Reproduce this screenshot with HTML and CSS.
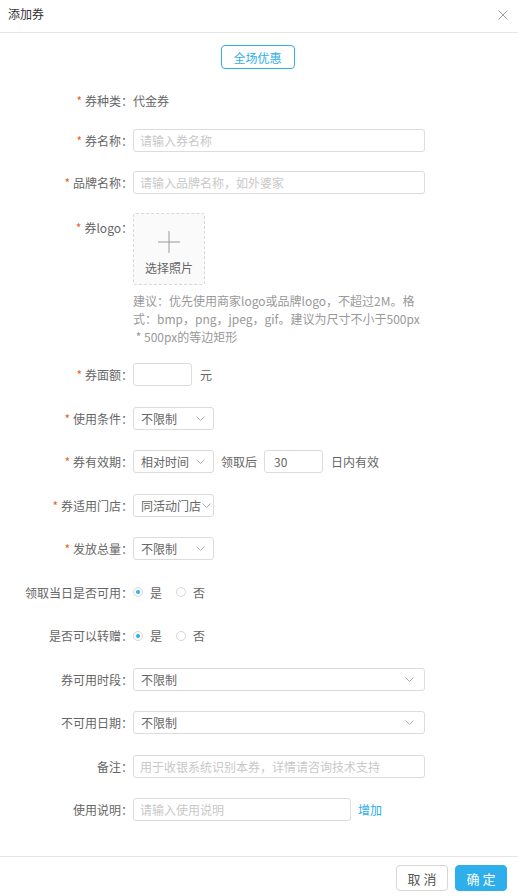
FILE: index.html
```html
<!DOCTYPE html>
<html lang="zh-CN">
<head>
    <meta charset="UTF-8">
    <meta name="viewport" content="width=device-width, initial-scale=1.0">
    <title>添加券</title>
    <link rel="stylesheet" href="styles.css">
</head>
<body>

    <div class="dialog">
        <div class="dialog-header">
            <span class="dialog-title">添加券</span>
            <svg class="close" width="10" height="10" viewBox="0 0 10 10">
                <path d="M0.5 0.5L9.5 9.5M9.5 0.5L0.5 9.5" stroke="#a0a0a0" stroke-width="1" fill="none"/>
            </svg>
        </div>

        <div class="dialog-body">
            <div class="tab-wrap">
                <button class="tab-btn">全场优惠</button>
            </div>

            <div class="group group-top">
                <div class="row row-text">
                    <label class="label"><span class="req">*</span>券种类：</label>
                    <span class="value">代金券</span>
                </div>

                <div class="row">
                    <label class="label"><span class="req">*</span>券名称：</label>
                    <input class="input input-wide" type="text" placeholder="请输入券名称">
                </div>

                <div class="row">
                    <label class="label"><span class="req">*</span>品牌名称：</label>
                    <input class="input input-wide" type="text" placeholder="请输入品牌名称，如外婆家">
                </div>

                <div class="row row-logo">
                    <label class="label label-logo"><span class="req">*</span>券logo：</label>
                    <div class="logo-field">
                        <div class="upload">
                            <svg class="plus" width="22" height="22" viewBox="0 0 22 22">
                                <path d="M11 0V22M0 11H22" stroke="#9a9a9a" stroke-width="1" fill="none"/>
                            </svg>
                            <span class="upload-text">选择照片</span>
                        </div>
                        <p class="hint">建议：优先使用商家logo或品牌logo，不超过2M。格<br>式：bmp，png，jpeg，gif。建议为尺寸不小于500px<br>&nbsp;* 500px的等边矩形</p>
                    </div>
                </div>
            </div>

            <div class="group group-bottom">
                <div class="row">
                    <label class="label"><span class="req">*</span>券面额：</label>
                    <input class="input input-short" type="text">
                    <span class="suffix">元</span>
                </div>

                <div class="row">
                    <label class="label"><span class="req">*</span>使用条件：</label>
                    <div class="select">
                        <span>不限制</span>
                        <svg class="arrow" width="9" height="5" viewBox="0 0 9 5"><path d="M0.5 0.5L4.5 4.5L8.5 0.5" stroke="#b0b0b0" fill="none"/></svg>
                    </div>
                </div>

                <div class="row">
                    <label class="label"><span class="req">*</span>券有效期：</label>
                    <div class="select">
                        <span>相对时间</span>
                        <svg class="arrow" width="9" height="5" viewBox="0 0 9 5"><path d="M0.5 0.5L4.5 4.5L8.5 0.5" stroke="#b0b0b0" fill="none"/></svg>
                    </div>
                    <span class="mid">领取后</span>
                    <input class="input input-short" type="text" value="30">
                    <span class="suffix">日内有效</span>
                </div>

                <div class="row">
                    <label class="label"><span class="req">*</span>券适用门店：</label>
                    <div class="select select-tight">
                        <span>同活动门店</span>
                        <svg class="arrow" width="9" height="5" viewBox="0 0 9 5"><path d="M0.5 0.5L4.5 4.5L8.5 0.5" stroke="#b0b0b0" fill="none"/></svg>
                    </div>
                </div>

                <div class="row">
                    <label class="label"><span class="req">*</span>发放总量：</label>
                    <div class="select">
                        <span>不限制</span>
                        <svg class="arrow" width="9" height="5" viewBox="0 0 9 5"><path d="M0.5 0.5L4.5 4.5L8.5 0.5" stroke="#b0b0b0" fill="none"/></svg>
                    </div>
                </div>

                <div class="row">
                    <label class="label">领取当日是否可用：</label>
                    <span class="radio checked"></span><span class="radio-text">是</span>
                    <span class="radio"></span><span class="radio-text">否</span>
                </div>

                <div class="row">
                    <label class="label">是否可以转赠：</label>
                    <span class="radio checked"></span><span class="radio-text">是</span>
                    <span class="radio"></span><span class="radio-text">否</span>
                </div>

                <div class="row">
                    <label class="label">券可用时段：</label>
                    <div class="select select-wide">
                        <span>不限制</span>
                        <svg class="arrow" width="9" height="5" viewBox="0 0 9 5"><path d="M0.5 0.5L4.5 4.5L8.5 0.5" stroke="#b0b0b0" fill="none"/></svg>
                    </div>
                </div>

                <div class="row">
                    <label class="label">不可用日期：</label>
                    <div class="select select-wide">
                        <span>不限制</span>
                        <svg class="arrow" width="9" height="5" viewBox="0 0 9 5"><path d="M0.5 0.5L4.5 4.5L8.5 0.5" stroke="#b0b0b0" fill="none"/></svg>
                    </div>
                </div>

                <div class="row">
                    <label class="label">备注：</label>
                    <input class="input input-wide" type="text" placeholder="用于收银系统识别本券，详情请咨询技术支持">
                </div>

                <div class="row">
                    <label class="label">使用说明：</label>
                    <input class="input input-mid" type="text" placeholder="请输入使用说明">
                    <a class="link">增加</a>
                </div>
            </div>
        </div>

        <div class="dialog-footer">
            <button class="btn btn-cancel">取 消</button>
            <button class="btn btn-ok">确 定</button>
        </div>
    </div>

</body>
</html>
```

FILE: styles.css
```css
body {
    margin: 0;
    font-family: "Noto Sans CJK SC", "Noto Sans", sans-serif;
    font-size: 12px;
    color: #666;
    background: #fff;
}
.dialog {
    height: 100vh;
    display: flex;
    flex-direction: column;
}
.dialog-header {
    height: 32px;
    border-bottom: 1px solid #e6e6e6;
    display: flex;
    align-items: center;
    justify-content: space-between;
    padding: 0 10px 0 8px;
    flex-shrink: 0;
}
.dialog-title {
    color: #333;
    font-size: 12px;
    margin-top: -6px;
}
.close {
    margin-top: -3px;
}
.dialog-body {
    flex: 1;
    padding-top: 12px;
}
.tab-wrap {
    display: flex;
    justify-content: center;
    margin-bottom: 20px;
    padding-right: 3px;
}
.tab-btn {
    width: 74px;
    height: 24px;
    border: 1px solid #2eaeea;
    border-radius: 4px;
    background: #fff;
    color: #2eaeea;
    font-family: inherit;
    font-size: 12px;
    padding: 0;
}
.group {
    display: flex;
    flex-direction: column;
}
.group-top {
    gap: 19px;
}
.group-bottom {
    gap: 20.5px;
    margin-top: 17px;
}
.row {
    display: flex;
    align-items: center;
    min-height: 23px;
}
.row-text {
    margin-bottom: -2px;
}
.row-logo {
    align-items: flex-start;
}
.label {
    width: 133px;
    flex-shrink: 0;
    text-align: right;
    line-height: 23px;
    color: #666;
}
.label-logo {
    padding-top: 3px;
}
.req {
    color: #e8632b;
    margin-right: 3px;
}
.value {
    color: #666;
}
.input {
    box-sizing: border-box;
    height: 23px;
    border: 1px solid #dcdcdc;
    border-radius: 3px;
    padding: 0 6px;
    font-family: inherit;
    font-size: 12px;
    color: #666;
    outline: none;
}
.input::placeholder {
    color: #c8c8c8;
}
.input-wide {
    width: 292px;
}
.input-mid {
    width: 218px;
}
.input-short {
    width: 59px;
    padding-left: 9px;
}
.suffix {
    margin-left: 8px;
}
.mid {
    margin: 0 7px;
}
.select {
    box-sizing: border-box;
    width: 81px;
    height: 23px;
    border: 1px solid #dcdcdc;
    border-radius: 3px;
    padding: 0 8px 0 7px;
    display: flex;
    align-items: center;
    justify-content: space-between;
    color: #666;
}
.select-tight {
    padding-right: 2px;
}
.select-tight span {
    white-space: nowrap;
}
.select-wide {
    width: 292px;
    padding-right: 10px;
}
.arrow {
    flex-shrink: 0;
}
.logo-field {
    display: flex;
    flex-direction: column;
}
.upload {
    box-sizing: border-box;
    width: 72px;
    height: 72px;
    border: 1px dashed #d9d9d9;
    border-radius: 3px;
    background: #fafafa;
    display: flex;
    flex-direction: column;
    align-items: center;
}
.plus {
    margin-top: 17px;
}
.upload-text {
    margin-top: 6px;
    color: #666;
}
.hint {
    margin: 7px 0 0;
    width: 300px;
    line-height: 18px;
    color: #999;
}
.radio {
    box-sizing: border-box;
    width: 10px;
    height: 10px;
    border: 1px solid #d6d6d6;
    border-radius: 50%;
    display: inline-flex;
    align-items: center;
    justify-content: center;
}
.radio.checked::after {
    content: "";
    width: 4px;
    height: 4px;
    border-radius: 50%;
    background: #2eaeea;
}
.radio-text {
    margin: 0 14px 0 7px;
    color: #666;
}
.link {
    margin-left: 7px;
    color: #2eaeea;
    cursor: pointer;
}
.dialog-footer {
    height: 40px;
    border-top: 1px solid #e6e6e6;
    display: flex;
    justify-content: flex-end;
    align-items: flex-start;
    padding: 8px 11px 0 0;
    box-sizing: border-box;
    gap: 7px;
    flex-shrink: 0;
}
.btn {
    width: 52px;
    height: 26px;
    border-radius: 4px;
    font-family: inherit;
    font-size: 13px;
    padding: 0;
}
.btn-cancel {
    background: #fff;
    border: 1px solid #d6d6d6;
    color: #555;
}
.btn-ok {
    background: #2eaeea;
    border: 1px solid #2eaeea;
    color: #fff;
}
```
